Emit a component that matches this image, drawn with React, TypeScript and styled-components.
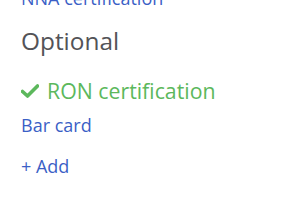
import React from "react";
import styled, { createGlobalStyle } from "styled-components";

const Global = createGlobalStyle`
  html, body { margin: 0; padding: 0; background: #fff; }
  body { font-family: "Open Sans", "Noto Sans", sans-serif; }
`;

const Panel = styled.div`
  padding: 0 0 0 21px;
  margin-top: -14px;
  display: flex;
  flex-direction: column;
`;

const Link = styled.a<{ $size?: number }>`
  color: #3b5fc6;
  font-size: ${(p) => p.$size ?? 18}px;
  line-height: 1.4;
  text-decoration: none;
  display: block;
`;

const Heading = styled.h3`
  margin: 14px 0 19px;
  font-size: 24.4px;
  font-weight: 400;
  color: #535357;
  line-height: 1.3;
`;

const Done = styled.div`
  display: flex;
  align-items: center;
  gap: 8px;
  color: #5cb85c;
  font-size: 21.3px;
  line-height: 1.4;
  margin-bottom: 7px;
`;

const Check = () => (
  <svg width="18" height="14" viewBox="0 0 18 14">
    <path d="M1.5 7.5 L6.5 12 L16.5 2" fill="none" stroke="#5cb85c" strokeWidth="3.6" strokeLinecap="round" strokeLinejoin="round" />
  </svg>
);

const Item = styled(Link)`
  margin-bottom: 16px;
`;

export default function App() {
  return (
    <>
      <Global />
      <Panel>
        <Link $size={18}>NNA certification</Link>
        <Heading>Optional</Heading>
        <Done>
          <Check />
          <span>RON certification</span>
        </Done>
        <Item>Bar card</Item>
        <Item>+ Add</Item>
      </Panel>
    </>
  );
}
